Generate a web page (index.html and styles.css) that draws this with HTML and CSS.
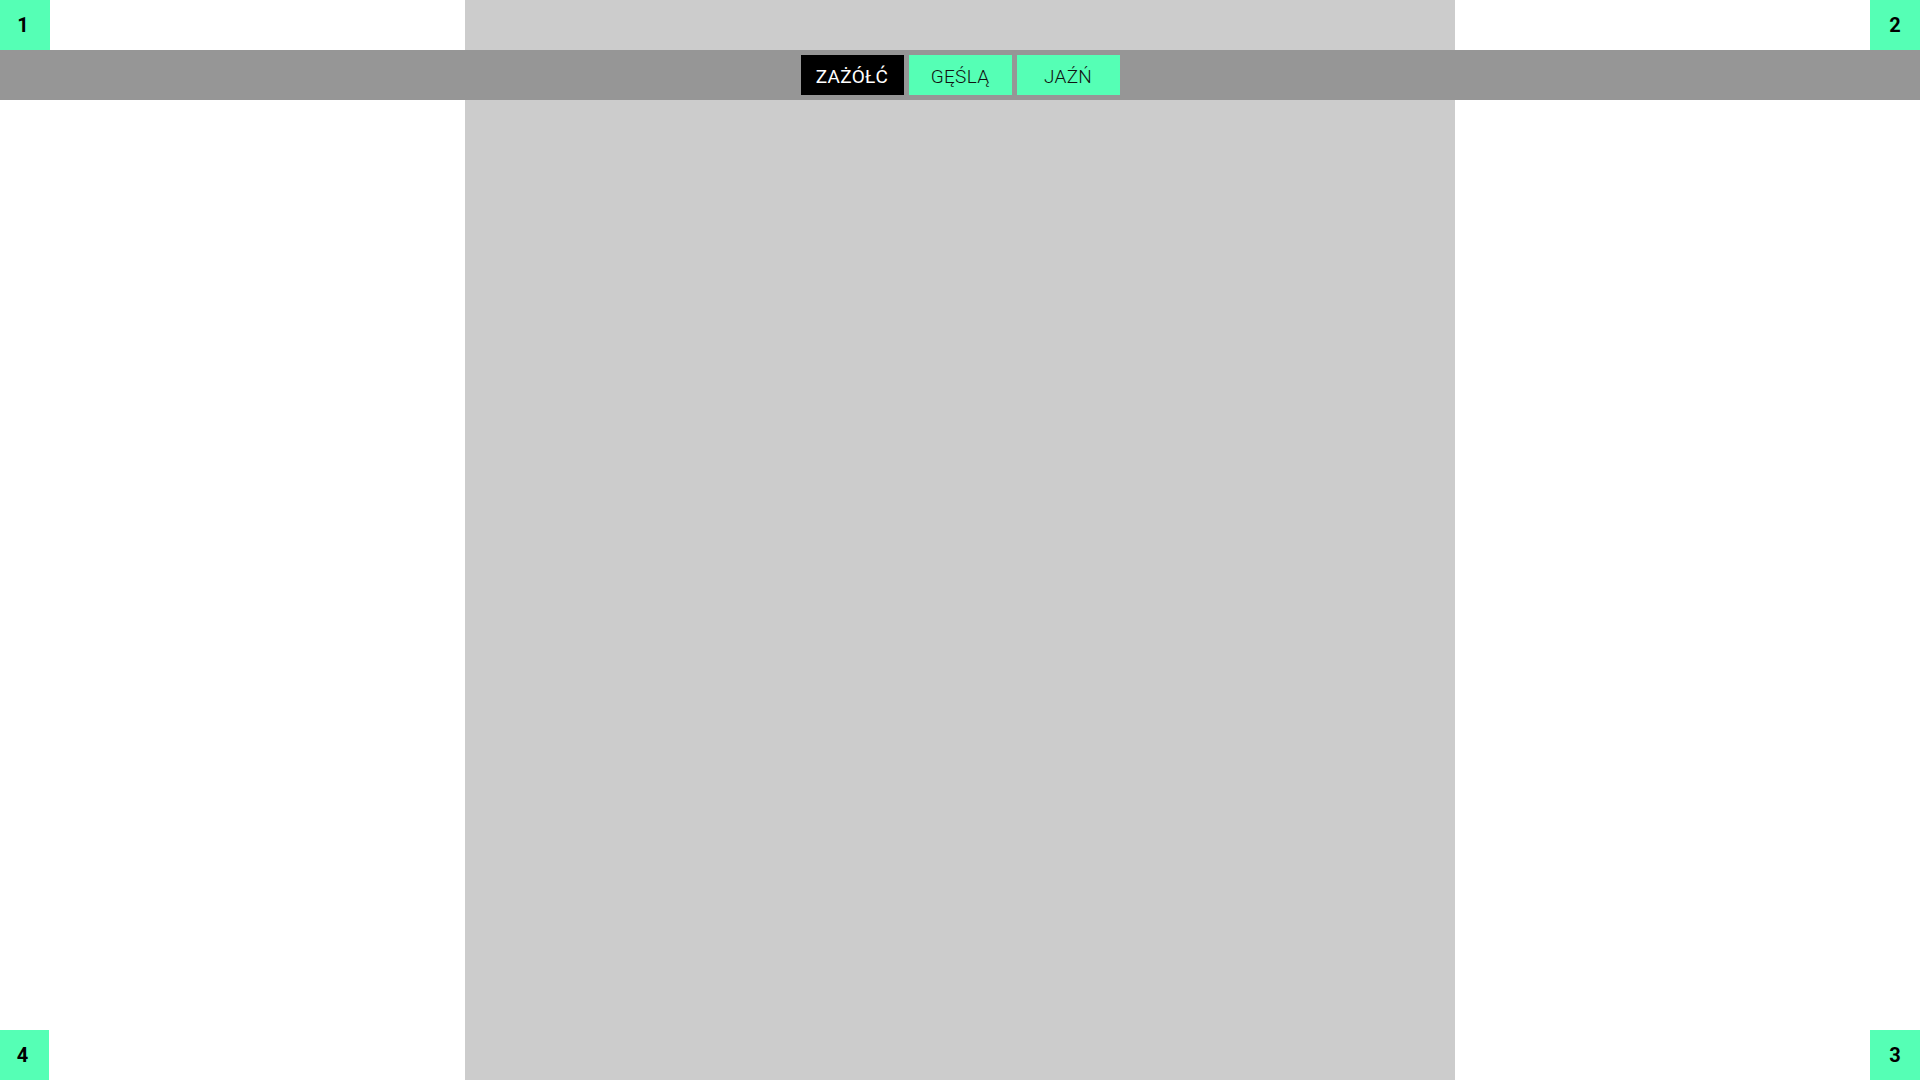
FILE: index.html
```html
<!DOCTYPE html>
<html lang="pl">
<head>
<meta charset="UTF-8">
<meta name="viewport" content="width=device-width, initial-scale=1.0">
<title>Przyciski</title>
<link rel="stylesheet" href="styles.css">
</head>
<body>

<div class="corner corner-tl">1</div>
<div class="corner corner-tr">2</div>
<div class="corner corner-br">3</div>
<div class="corner corner-bl">4</div>

<div class="column"></div>

<div class="bar">
  <button class="btn active">ZAŻÓŁĆ</button>
  <button class="btn">GĘŚLĄ</button>
  <button class="btn">JAŹŃ</button>
</div>

</body>
</html>
```

FILE: styles.css
```css
html, body {
  margin: 0;
  height: 100%;
}
body {
  font-family: 'Roboto', 'DejaVu Sans', sans-serif;
  background-color: #fff;
  overflow: hidden;
}
.column {
  width: 990px;
  height: 100vh;
  margin: 0 auto;
  background-color: #ccc;
}
.bar {
  position: absolute;
  top: 50px;
  left: 0;
  right: 0;
  height: 50px;
  background-color: #969696;
  display: flex;
  justify-content: center;
  align-items: center;
  gap: 5px;
}
.btn {
  width: 103px;
  height: 40px;
  border: none;
  border-radius: 0;
  padding: 3px 0 0;
  background-color: #55ffb5;
  color: #111;
  font-family: 'Roboto', 'DejaVu Sans', sans-serif;
  font-size: 19px;
  font-weight: 300;
  letter-spacing: 0.3px;
  cursor: pointer;
}
.btn.active {
  background-color: #000;
  color: #fff;
  font-weight: 400;
}
.corner {
  position: absolute;
  width: 50px;
  height: 50px;
  background-color: #55ffb5;
  color: #000;
  font-size: 20px;
  font-weight: bold;
  display: flex;
  justify-content: center;
  align-items: center;
  box-sizing: border-box;
}
.corner-tl { top: 0; left: 0; padding-right: 4px; }
.corner-tr { top: 0; right: 0; }
.corner-br { bottom: 0; right: 0; }
.corner-bl { bottom: 0; left: 0; width: 49px; padding-right: 4px; }
```
